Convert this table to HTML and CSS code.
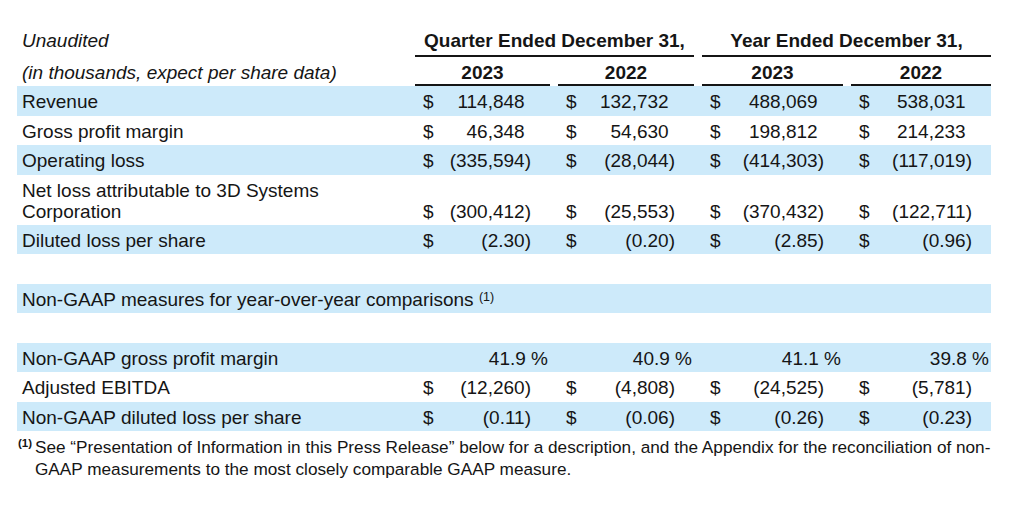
FILE: index.html
```html
<!DOCTYPE html>
<html lang="en">
<head>
<meta charset="utf-8">
<title>3D Systems – Financial Summary</title>
<link rel="stylesheet" href="styles.css">
</head>
<body>
<div class="wrap">
  <div class="row head1">
    <div class="lab it">Unaudited</div>
    <div class="hc span2"><div class="ul">Quarter Ended December 31,</div></div>
    <div class="hc span2 last"><div class="ul">Year Ended December 31,</div></div>
  </div>
  <div class="row head2">
    <div class="lab it">(in thousands, expect per share data)</div>
    <div class="hc"><div class="ul">2023</div></div>
    <div class="hc"><div class="ul">2022</div></div>
    <div class="hc"><div class="ul">2023</div></div>
    <div class="hc last"><div class="ul">2022</div></div>
  </div>

  <div class="row body shade">
    <div class="lab">Revenue</div>
    <div class="v"><span>$</span><span class="num p">114,848</span></div>
    <div class="v"><span>$</span><span class="num p">132,732</span></div>
    <div class="v"><span>$</span><span class="num p">488,069</span></div>
    <div class="v last"><span>$</span><span class="num p">538,031</span></div>
  </div>
  <div class="row body">
    <div class="lab">Gross profit margin</div>
    <div class="v"><span>$</span><span class="num p">46,348</span></div>
    <div class="v"><span>$</span><span class="num p">54,630</span></div>
    <div class="v"><span>$</span><span class="num p">198,812</span></div>
    <div class="v last"><span>$</span><span class="num p">214,233</span></div>
  </div>
  <div class="row body shade">
    <div class="lab">Operating loss</div>
    <div class="v"><span>$</span><span class="num">(335,594)</span></div>
    <div class="v"><span>$</span><span class="num">(28,044)</span></div>
    <div class="v"><span>$</span><span class="num">(414,303)</span></div>
    <div class="v last"><span>$</span><span class="num">(117,019)</span></div>
  </div>
  <div class="row tall">
    <div class="lab">Net loss attributable to 3D Systems<br>Corporation</div>
    <div class="v"><span>$</span><span class="num">(300,412)</span></div>
    <div class="v"><span>$</span><span class="num">(25,553)</span></div>
    <div class="v"><span>$</span><span class="num">(370,432)</span></div>
    <div class="v last"><span>$</span><span class="num">(122,711)</span></div>
  </div>
  <div class="row body shade">
    <div class="lab">Diluted loss per share</div>
    <div class="v"><span>$</span><span class="num">(2.30)</span></div>
    <div class="v"><span>$</span><span class="num">(0.20)</span></div>
    <div class="v"><span>$</span><span class="num">(2.85)</span></div>
    <div class="v last"><span>$</span><span class="num">(0.96)</span></div>
  </div>
  <div class="row body blank"></div>
  <div class="row body shade">
    <div class="lab wide">Non-GAAP measures for year-over-year comparisons <sup class="ref">(1)</sup></div>
  </div>
  <div class="row body blank"></div>
  <div class="row body shade">
    <div class="lab">Non-GAAP gross profit margin</div>
    <div class="v pct">41.9 %</div>
    <div class="v pct">40.9 %</div>
    <div class="v pct">41.1 %</div>
    <div class="v pct last">39.8 %</div>
  </div>
  <div class="row body">
    <div class="lab">Adjusted EBITDA</div>
    <div class="v"><span>$</span><span class="num">(12,260)</span></div>
    <div class="v"><span>$</span><span class="num">(4,808)</span></div>
    <div class="v"><span>$</span><span class="num">(24,525)</span></div>
    <div class="v last"><span>$</span><span class="num">(5,781)</span></div>
  </div>
  <div class="row body shade">
    <div class="lab">Non-GAAP diluted loss per share</div>
    <div class="v"><span>$</span><span class="num">(0.11)</span></div>
    <div class="v"><span>$</span><span class="num">(0.06)</span></div>
    <div class="v"><span>$</span><span class="num">(0.26)</span></div>
    <div class="v last"><span>$</span><span class="num">(0.23)</span></div>
  </div>

  <div class="foot">
    <span class="mark">(1)</span>
    <p class="note">See “Presentation of Information in this Press Release” below for a description, and the Appendix for the reconciliation of non-GAAP measurements to the most closely comparable GAAP measure.</p>
  </div>
</div>
</body>
</html>
```

FILE: styles.css
```css
html, body {
  margin: 0;
  background: #ffffff;
}

body {
  font-family: "Liberation Sans", Arial, sans-serif;
  font-size: 19px;
  color: #151515;
}

.wrap {
  padding: 27px 0 0 17px;
  width: 974px;
}

.row {
  display: grid;
  grid-template-columns: 398px 143px 144px 149px 140px;
}

.row.body {
  height: 29.5px;
  box-sizing: border-box;
  padding-top: 2px;
  line-height: 27.5px;
}

.shade {
  background: #cdeafa;
}

.lab {
  padding-left: 5px;
  white-space: nowrap;
}

.lab.wide {
  grid-column: 1 / -1;
}

.it {
  font-style: italic;
}

/* header rows */
.head1 {
  height: 30px;
  line-height: 22px;
  align-items: end;
}

.head1 .lab {
  padding-bottom: 5px;
}

.head1 .ul {
  padding-bottom: 3px;
}

.head2 {
  height: 29px;
  line-height: 22px;
  align-items: end;
}

.head2 .lab {
  padding-bottom: 2px;
}

.hc {
  padding-right: 8px;
  font-weight: bold;
}

.hc.span2 {
  grid-column: span 2;
}

.hc.last,
.v.last {
  padding-right: 0;
}

.ul {
  text-align: center;
  border-bottom: 2px solid #151515;
}

/* value cells */
.v {
  display: flex;
  justify-content: space-between;
  padding-left: 8px;
  padding-right: 8px;
}

.num {
  padding-right: 19px;
}

.num.p::after {
  content: ")";
  visibility: hidden;
}

.v.pct {
  justify-content: flex-end;
  padding-right: 10px;
}

.v.pct.last {
  padding-right: 2px;
}

/* two-line row */
.tall {
  height: 50px;
  line-height: 21px;
  align-items: end;
}

.tall .lab {
  align-self: stretch;
  padding-top: 5px;
  white-space: normal;
}

.tall .v {
  padding-bottom: 3px;
}

.ref {
  font-size: 12.5px;
  line-height: 0;
  vertical-align: 5px;
}

/* footnote */
.foot {
  display: flex;
  margin-top: 5px;
  padding-left: 1px;
}

.mark {
  flex: 0 0 17px;
  font-size: 11.5px;
  font-weight: bold;
  line-height: 15px;
}

.note {
  margin: 0;
  width: 960px;
  font-size: 17.2px;
  line-height: 22px;
}
```
